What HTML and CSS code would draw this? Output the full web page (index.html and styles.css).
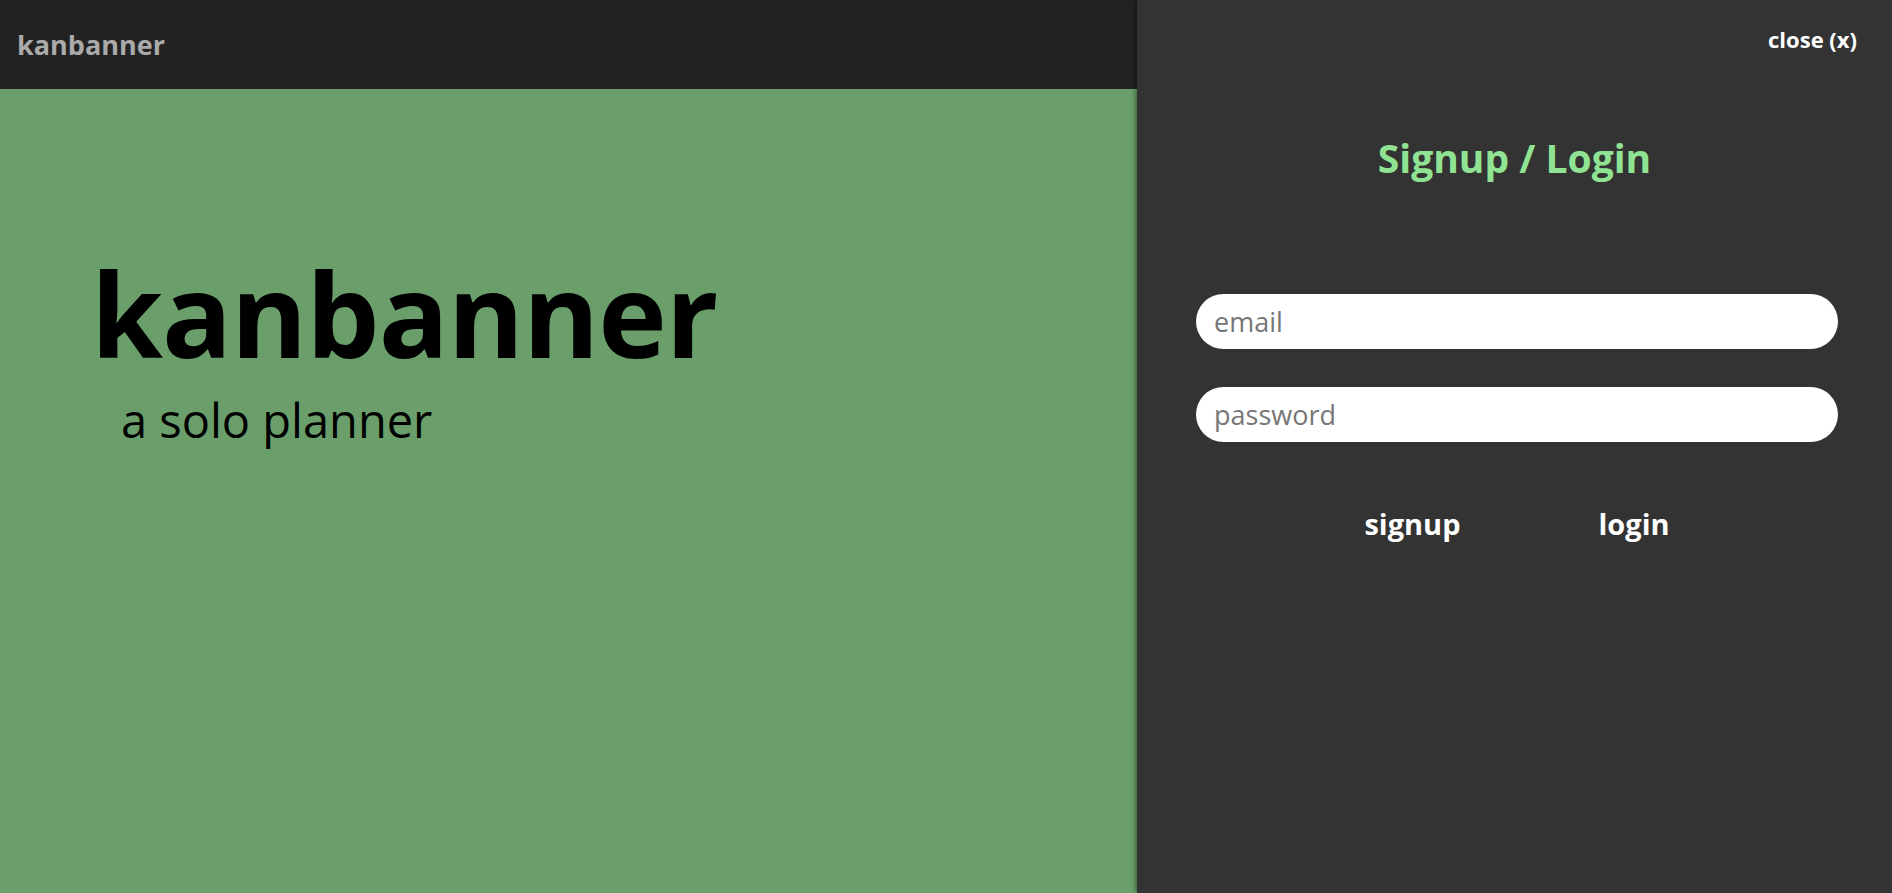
FILE: index.html
```html
<!DOCTYPE html>
<html lang="en">
<head>
<meta charset="utf-8">
<title>kanbanner</title>
<link rel="stylesheet" href="styles.css">
</head>
<body>
<div class="app">
  <div class="left">
    <header class="topbar">
      <span class="brand">kanbanner</span>
    </header>
    <main class="hero">
      <h1 class="hero-title">kanbanner</h1>
      <p class="hero-sub">a solo planner</p>
    </main>
  </div>
  <aside class="panel">
    <div class="panel-top">
      <button class="close-btn" type="button">close (x)</button>
    </div>
    <h2 class="panel-title">Signup / Login</h2>
    <form class="auth-form">
      <input class="field" type="email" placeholder="email">
      <input class="field field-password" type="password" placeholder="password">
      <div class="actions">
        <button class="action" type="button">signup</button>
        <button class="action" type="button">login</button>
      </div>
    </form>
  </aside>
</div>
</body>
</html>
```

FILE: styles.css
```css
* {
  box-sizing: border-box;
}

html, body {
  margin: 0;
  height: 100%;
}

body {
  font-family: "Open Sans", "Noto Sans", sans-serif;
  background: #333333;
}

.app {
  display: flex;
  height: 100vh;
  overflow: hidden;
}

.left {
  flex: 0 0 1137px;
  display: flex;
  flex-direction: column;
}

.topbar {
  height: 89px;
  background: #222222;
  display: flex;
  align-items: center;
  padding-left: 17px;
}

.brand {
  color: #aaaaaa;
  font-weight: 700;
  font-size: 27px;
  line-height: 38px;
}

.hero {
  flex: 1;
  background: #6a9f6b;
  padding: 166px 0 0 91px;
}

.hero-title {
  margin: 0;
  font-size: 116px;
  line-height: 116px;
  font-weight: 700;
  color: #000;
  letter-spacing: -1px;
}

.hero-sub {
  margin: 21px 0 0 30px;
  font-size: 47px;
  line-height: 56px;
  font-weight: 400;
  color: #000;
}

.panel {
  flex: 1;
  background: #333333;
  box-shadow: -2px 0 4px rgba(0, 0, 0, 0.35);
  position: relative;
  z-index: 1;
  display: flex;
  flex-direction: column;
}

.panel-top {
  display: flex;
  justify-content: flex-end;
  padding: 25px 35px 0 0;
}

.close-btn {
  background: none;
  border: none;
  padding: 0;
  color: #ffffff;
  font-family: inherit;
  font-weight: 700;
  font-size: 22px;
  line-height: 28px;
  cursor: pointer;
}

.panel-title {
  margin: 81px 0 0;
  text-align: center;
  color: #90e392;
  font-size: 39px;
  line-height: 47px;
  font-weight: 700;
}

.auth-form {
  margin-top: 113px;
  padding: 0 54px 0 59px;
  display: flex;
  flex-direction: column;
}

.field {
  height: 55px;
  border: none;
  border-radius: 28px;
  background: #ffffff;
  padding: 0 18px;
  font-family: inherit;
  font-size: 27px;
  color: #222;
  outline: none;
}

.field::placeholder {
  color: #767676;
}

.field-password {
  margin-top: 38px;
}

.actions {
  margin-top: 64px;
  display: flex;
  justify-content: center;
  gap: 138px;
}

.action {
  background: none;
  border: none;
  padding: 0;
  color: #ffffff;
  font-family: inherit;
  font-weight: 700;
  font-size: 29px;
  line-height: 35px;
  cursor: pointer;
}
```
